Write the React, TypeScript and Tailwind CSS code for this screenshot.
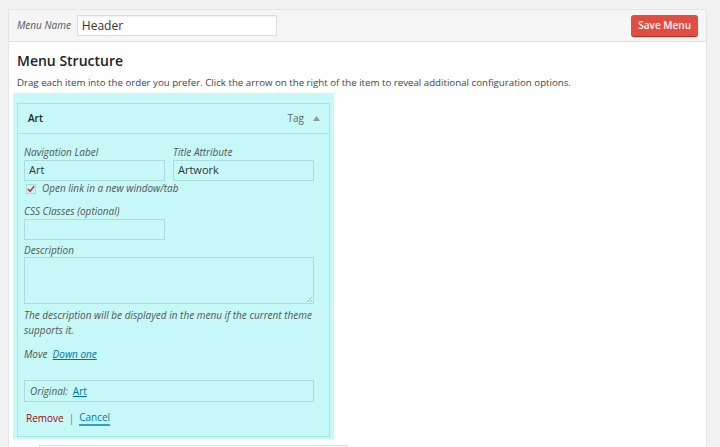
export default function App() {
  return (
    <div className="h-[447px] overflow-hidden bg-[#f1f1f1] pl-[8px] pr-[13px] pt-[9px] font-['Open_Sans',sans-serif] text-[#444]">
      <div className="border border-[#e5e5e5] bg-white">
        <div className="flex h-[32px] items-center justify-between border-b border-[#dfdfdf] bg-[#f5f5f5] pl-[8px] pr-[8px]">
          <div className="flex items-center gap-[6px]">
            <span className="text-[10px] italic text-[#555]">Menu Name</span>
            <div className="flex h-[21px] w-[200px] items-center border border-[#ddd] bg-white px-[4px] text-[12px] text-[#333] shadow-[inset_0_1px_2px_rgba(0,0,0,0.07)]">
              Header
            </div>
          </div>
          <button className="h-[21px] rounded-[3px] bg-[#e14d43] px-[7px] text-[10px] font-semibold text-white shadow-[0_1px_0_#ba281e]">
            Save Menu
          </button>
        </div>

        <div className="px-[8px] pb-[8px] pt-[9px]">
          <h2 className="text-[14px] font-semibold leading-[20px] text-[#222]">Menu Structure</h2>
          <p className="mt-[2px] text-[9.7px] leading-[20px] text-[#444]">
            Drag each item into the order you prefer. Click the arrow on the right of the item to reveal
            additional configuration options.
          </p>

          <div className="-ml-[4px] w-[321px] bg-[#c6f8f8] pb-[2px] pl-[4px] pr-[4px] pt-[10px]">
            <div className="border border-[#aee2e2]">
              <div className="flex h-[30px] items-center justify-between border-b border-[#aee2e2] pl-[10px] pr-[9px]">
                <span className="text-[10px] font-semibold text-[#222]">Art</span>
                <div className="flex items-center gap-[9px]">
                  <span className="text-[10px] text-[#666]">Tag</span>
                  <svg width="7" height="5" viewBox="0 0 7 5">
                    <path d="M0 5 L3.5 0 L7 5 Z" fill="#8c9a9a" />
                  </svg>
                </div>
              </div>

              <div className="px-[6px] pb-[10px] pt-[11px] text-[10px] italic text-[#555]">
                <div className="flex gap-[8px]">
                  <div>
                    <div className="leading-[14px]">Navigation Label</div>
                    <div className="mt-[1px] flex h-[21px] w-[141px] items-center border border-[#a9dcdc] bg-[#c6f8f8] px-[4px] text-[11px] not-italic text-[#333]">
                      Art
                    </div>
                  </div>
                  <div>
                    <div className="leading-[14px]">Title Attribute</div>
                    <div className="mt-[1px] flex h-[21px] w-[141px] items-center border border-[#a9dcdc] bg-[#c6f8f8] px-[4px] text-[11px] not-italic text-[#333]">
                      Artwork
                    </div>
                  </div>
                </div>

                <div className="flex h-[15px] items-center gap-[6px] pl-[2px]">
                  <div className="flex h-[10px] w-[10px] items-center justify-center border border-[#a9dcdc] bg-[#c6f8f8]">
                    <svg width="9" height="8" viewBox="0 0 9 8">
                      <path d="M1 4 L3.5 6.5 L8 1" stroke="#d0312d" strokeWidth="1.8" fill="none" />
                    </svg>
                  </div>
                  <span className="leading-[15px]">Open link in a new window/tab</span>
                </div>

                <div className="mt-[8px] leading-[14px]">CSS Classes (optional)</div>
                <div className="mt-[1px] h-[21px] w-[141px] border border-[#a9dcdc] bg-[#c6f8f8]" />

                <div className="mt-[3px] leading-[14px]">Description</div>
                <div className="relative h-[47px] w-[290px] border border-[#a9dcdc] bg-[#c6f8f8]">
                  <svg className="absolute bottom-[1px] right-[1px]" width="6" height="6" viewBox="0 0 6 6">
                    <path d="M6 1 L1 6 M6 4 L4 6" stroke="#9aa" strokeWidth="0.8" />
                  </svg>
                </div>

                <p className="mt-[4px] leading-[15px]">
                  The description will be displayed in the menu if the current theme supports it.
                </p>

                <div className="mt-[9px] flex items-center gap-[5px] leading-[14px]">
                  <span>Move</span>
                  <span className="text-[#0073aa] underline">Down one</span>
                </div>

                <div className="mt-[19px] flex h-[22px] w-[290px] items-center gap-[5px] border border-[#a9dcdc] px-[5px]">
                  <span>Original:</span>
                  <span className="not-italic text-[#0073aa] underline">Art</span>
                </div>

                <div className="mt-[8px] flex items-center gap-[5px] pl-[2px] not-italic">
                  <span className="text-[#a00]">Remove</span>
                  <span className="text-[#777]">|</span>
                  <span className="border-b-2 border-[#2ea2cc] leading-[14px] text-[#0073aa]">Cancel</span>
                </div>
              </div>
            </div>
          </div>

          <div className="ml-[22px] mt-[6px] h-[10px] w-[308px] border border-[#ddd] bg-white" />
        </div>
      </div>
    </div>
  );
}
